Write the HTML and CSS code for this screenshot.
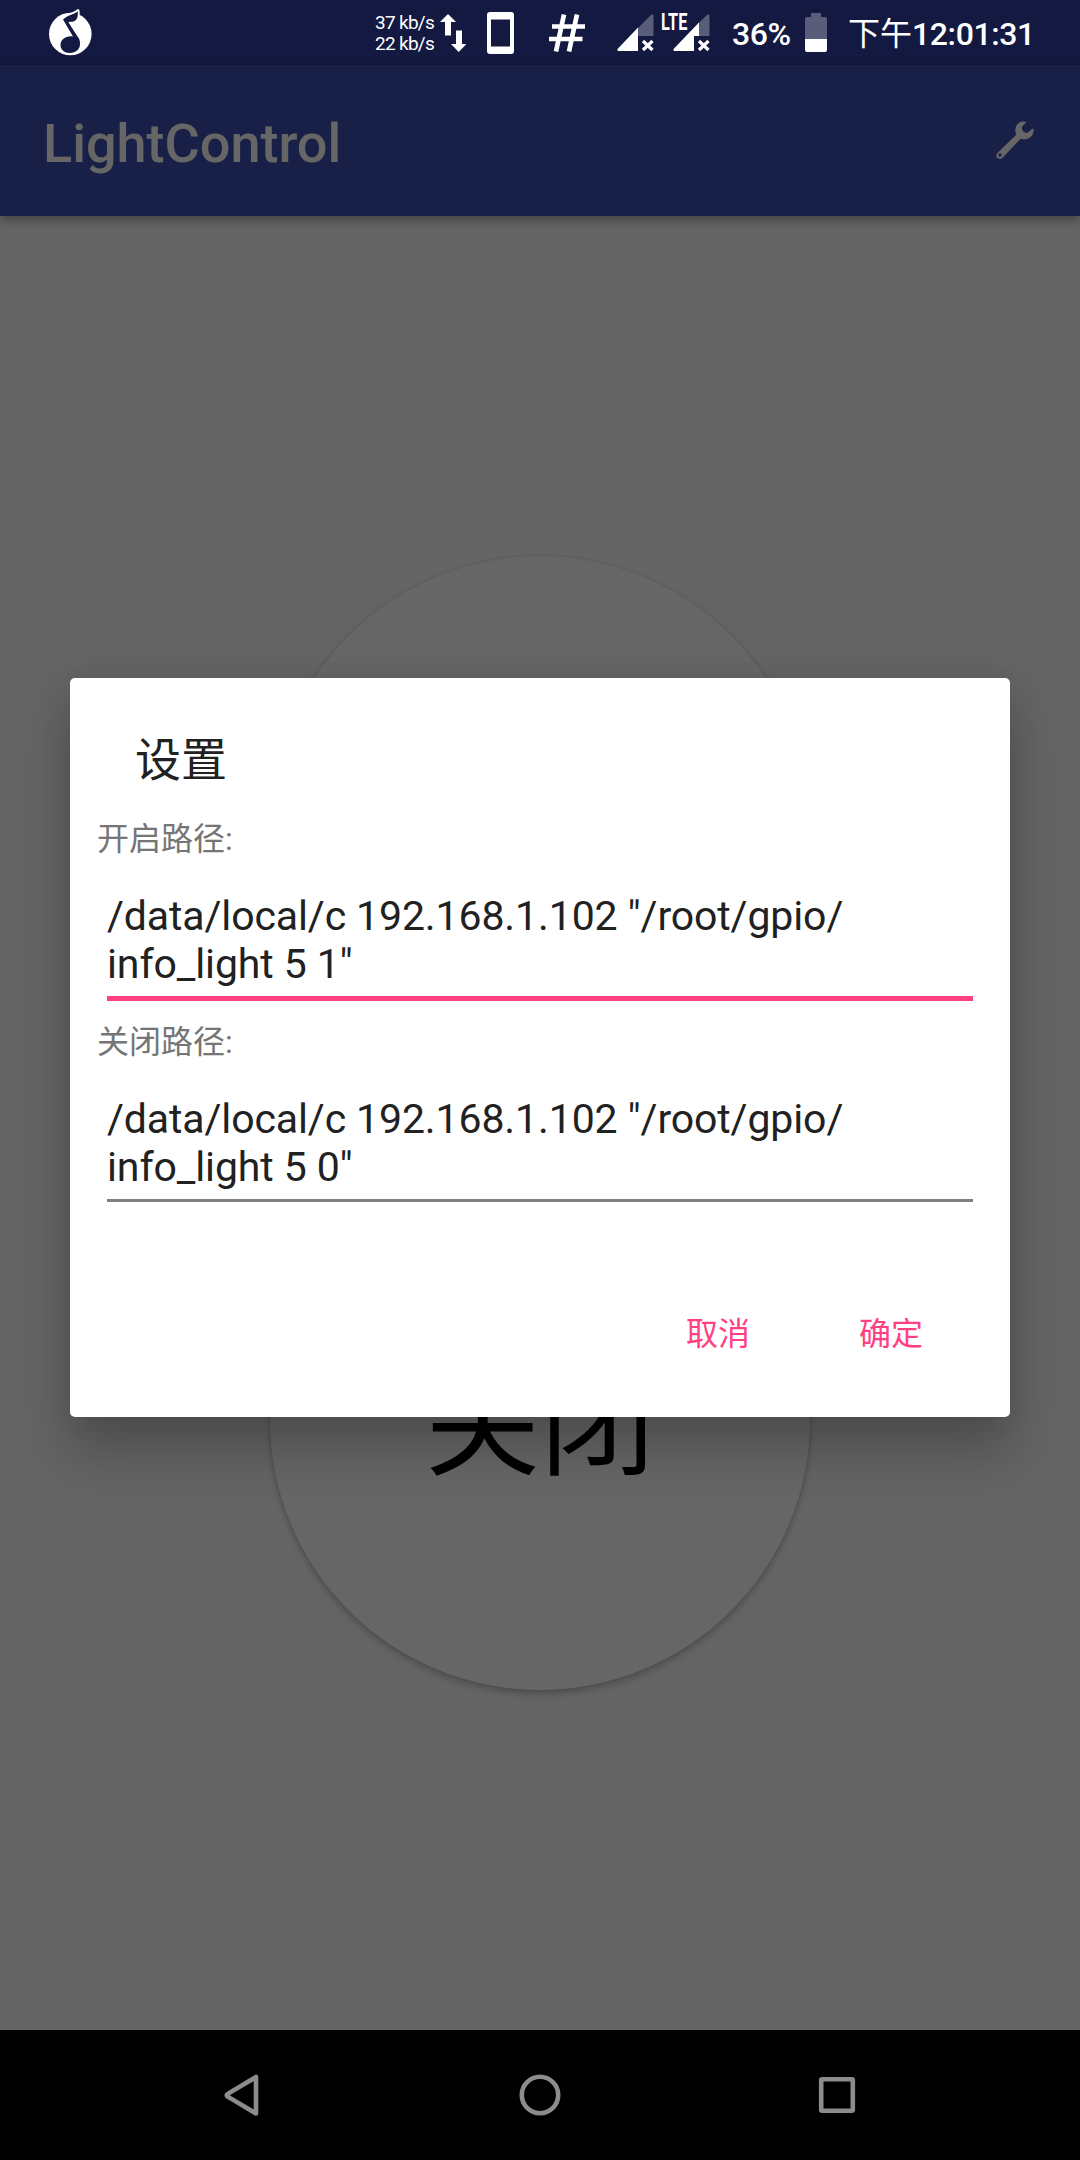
FILE: index.html
```html
<!DOCTYPE html>
<html lang="zh-CN">
<head>
<meta charset="utf-8">
<title>LightControl</title>
<link rel="stylesheet" href="styles.css">
</head>
<body>
<div class="phone">
  <header class="status-bar">
    <svg class="music" viewBox="0 0 44 48" width="44" height="48">
      <circle cx="22.3" cy="26" r="21.3" fill="#fff"/>
      <path d="M13 12C15 5 24 6 29 1.4Q31 0 31.6 3L31.4 10L25 15Z" fill="#fff"/>
      <path d="M15 11.5C20 6.5 25 7 30 3.2C30.2 7 30 11.5 26 13.2C24 14.2 21.5 13 20.5 14.5L29.5 28.5C31.5 30.5 32 33 32 36C32 41.5 27.5 45 22 45C16.500 45 12.500 41.500 12.500 37C12.500 31.500 18 27.500 25 28.500Z" fill="#131940"/>
      <path d="M30.5 4V15" stroke="#fff" stroke-width="1.4"/>
    </svg>
    <div class="speed"><span>37 kb/s</span><span>22 kb/s</span></div>
    <svg class="arrows" viewBox="0 0 26 38" width="26" height="38" fill="#fff"><path d="M8 0L16 8H11V21.500H5V8H0ZM16 16.500H22V30H26.500L18.700 38L11 30H16Z"/></svg>
    <svg class="device" viewBox="0 0 27 42" width="27" height="42"><path fill="#fff" fill-rule="evenodd" d="M3 0H24Q27 0 27 3V39Q27 42 24 42H3Q0 42 0 39V3Q0 0 3 0ZM4 7.500V34.500H23V7.500Z"/></svg>
    <svg class="hash" viewBox="0 0 36 38" width="36" height="38" fill="none" stroke="#fff" stroke-width="4.700"><path d="M15 .5L7 37.500M28 .5L20 37.500M3 12.500H36M0 25H33.500"/></svg>
    <svg class="signal" viewBox="0 0 37 38" width="37" height="38"><path d="M21 14L34.500 .6Q36.500 0 36.500 2V22H21Z" fill="#5a5d79"/><path d="M21 13.500V37H1.500Q-.5 37 1 34.500Z" fill="#fff"/><path d="M26 27L35.500 36M35.500 27L26 36" stroke="#fff" stroke-width="3.200"/></svg>
    <div class="lte">
      <svg class="signal" viewBox="0 0 37 38" width="37" height="38"><path d="M25 9.500L34.500 .6Q36.500 0 36.500 2V22H21V14Z" fill="#5a5d79"/><path d="M26 8.500V22H21V37H1.500Q-.5 37 1 34.500Z" fill="#fff"/><path d="M26 27L35.500 36M35.500 27L26 36" stroke="#fff" stroke-width="3.200"/></svg>
      <span class="lte-label">LTE</span>
    </div>
    <span class="percent">36%</span>
    <svg class="battery" viewBox="0 0 22 39" width="22" height="39"><path d="M6 0H16V4H20Q22 4 22 6V26H0V6Q0 4 2 4H6Z" fill="#5a5d79"/><path d="M0 26H22V37Q22 39 20 39H2Q0 39 0 37Z" fill="#fff"/></svg>
    <span class="clock"><span class="period">下午</span>12:01:31</span>
  </header>
  <div class="app-bar">
    <h1 class="app-title">LightControl</h1>
    <svg class="wrench" viewBox="0 0 38 38" width="38" height="38"><path fill="#fff" fill-rule="evenodd" d="M30.500 1.200C25 -1 19.500 3 19.300 8.500C19.200 10.300 19.500 12 20.500 13.500L1.200 32.200C-.3 34 0 36 1.500 37.100C3 38.300 5 38.200 6.500 36.700L24.700 17.700C30 19.500 35.500 17 37 12.500C38 10 37.700 8.500 37 7.200L31.800 11.500C29.500 12.500 26.500 11 26 8C25.700 6.500 26.300 5.500 27 4.600ZM4 32.300A1.700 1.700 0 1 1 4 35.700A1.700 1.700 0 1 1 4 32.300Z"/></svg>
  </div>
  <main class="content">
    <div class="round-button">开启</div>
    <div class="round-button">关闭</div>
  </main>
  <nav class="nav-bar">
    <svg viewBox="0 0 42 42" width="42" height="42"><path d="M34 3V39.500L5.700 22.600Q3.700 21.200 5.700 19.900Z"/></svg>
    <svg viewBox="0 0 42 42" width="42" height="42"><circle cx="21" cy="21" r="18.200"/></svg>
    <svg viewBox="0 0 42 42" width="42" height="42"><rect x="5.200" y="5.200" width="31.600" height="31.600" rx="1"/></svg>
  </nav>
  <div class="scrim">
    <section class="dialog">
      <h2 class="dialog-title">设置</h2>
      <div class="label">开启路径:</div>
      <div class="field focused">/data/local/c 192.168.1.102 "/root/gpio/<br>info_light 5 1"</div>
      <div class="label">关闭路径:</div>
      <div class="field">/data/local/c 192.168.1.102 "/root/gpio/<br>info_light 5 0"</div>
      <div class="actions"><span>取消</span><span>确定</span></div>
    </section>
  </div>
</div>
</body>
</html>
```
FILE: styles.css
```css
* { box-sizing: border-box; }
body { margin: 0; font-family: Roboto, "Noto Sans CJK SC", sans-serif; }
h1, h2 { margin: 0; font-weight: 400; }
svg { display: block; flex: none; }
.phone {
  position: relative;
  width: 1080px;
  height: 2160px;
  display: flex;
  flex-direction: column;
  background: #fafafa;
  overflow: hidden;
}
.status-bar {
  height: 65px;
  display: flex;
  align-items: flex-start;
  padding-left: 48px;
  background: #131940;
  color: #fff;
  white-space: nowrap;
}
.music { margin-top: 8px; }
.speed {
  display: flex;
  flex-direction: column;
  width: 60px;
  margin: 12px 0 0 283px;
  font-size: 19px;
  line-height: 21px;
  letter-spacing: -.7px;
}
.arrows { margin: 14px 0 0 5px; }
.device { margin: 12px 0 0 21px; }
.hash { margin: 14px 0 0 35px; }
.signal { margin: 14px 0 0 32px; }
.lte { position: relative; margin-left: 19px; }
.lte .signal { margin-left: 0; }
.lte-label {
  position: absolute;
  left: -12px;
  top: 9px;
  font-size: 24px;
  line-height: 27px;
  font-weight: 700;
  transform: scaleX(.68);
  transform-origin: 0 0;
}
.percent {
  width: 60px;
  margin: 15px 0 0 22px;
  font-size: 32px;
  line-height: 38px;
  font-weight: 500;
  letter-spacing: -.4px;
}
.battery { margin: 13px 0 0 13px; }
.clock {
  margin: 15px 0 0 21px;
  font-size: 32px;
  line-height: 38px;
  font-weight: 500;
  letter-spacing: -.4px;
}
.period { font-weight: 400; letter-spacing: 0; }
.app-bar {
  position: relative;
  height: 151px;
  flex: none;
  display: flex;
  justify-content: space-between;
  padding: 0 46px 0 43px;
  background: #3f51b5;
  color: #fff;
  box-shadow: 0 4px 10px rgba(0, 0, 0, .35);
}
.app-title { font-size: 54px; line-height: 64px; font-weight: 500; margin-top: 47px; }
.wrench { margin-top: 56px; }
.content {
  flex: 1;
  display: flex;
  flex-direction: column;
  align-items: center;
  justify-content: center;
  gap: 54px;
}
.round-button {
  width: 540px;
  height: 540px;
  flex: none;
  display: flex;
  align-items: center;
  justify-content: center;
  padding-bottom: 9px;
  border-radius: 50%;
  background: #fff;
  color: #000;
  font-size: 115px;
  box-shadow: 0 4px 7px rgba(0, 0, 0, .22), 0 0 3px rgba(0, 0, 0, .12);
}
.nav-bar {
  height: 130px;
  flex: none;
  display: flex;
  justify-content: center;
  align-items: center;
  gap: 255px;
  background: #000;
}
.nav-bar svg { fill: none; stroke: #8c8c8c; stroke-width: 4.6; stroke-linejoin: round; }
.scrim {
  position: absolute;
  inset: 65px 0 130px;
  display: flex;
  justify-content: center;
  align-items: center;
  background: rgba(0, 0, 0, .6);
}
.dialog {
  width: 940px;
  height: 739px;
  padding: 48px 37px 0 27px;
  border-radius: 5px;
  background: #fff;
  color: #212121;
  box-shadow: 0 34px 50px rgba(0, 0, 0, .22), 0 0 30px rgba(0, 0, 0, .08);
}
.dialog-title { margin-left: 38px; font-size: 46px; line-height: 68px; }
.label { margin-top: 26px; font-size: 32px; line-height: 38px; color: #757575; }
.field {
  margin: 34px 0 0 10px;
  height: 107px;
  font-size: 41px;
  line-height: 48px;
  letter-spacing: -.11px;
  border-bottom: 3px solid #808080;
}
.field.focused { height: 109px; border-bottom: 5px solid #ff4081; }
.focused + .label { margin-top: 22px; }
.actions {
  display: flex;
  justify-content: flex-end;
  gap: 109px;
  margin: 110px 50px 0 0;
  font-size: 32px;
  line-height: 44px;
  color: #ff4081;
}
```
